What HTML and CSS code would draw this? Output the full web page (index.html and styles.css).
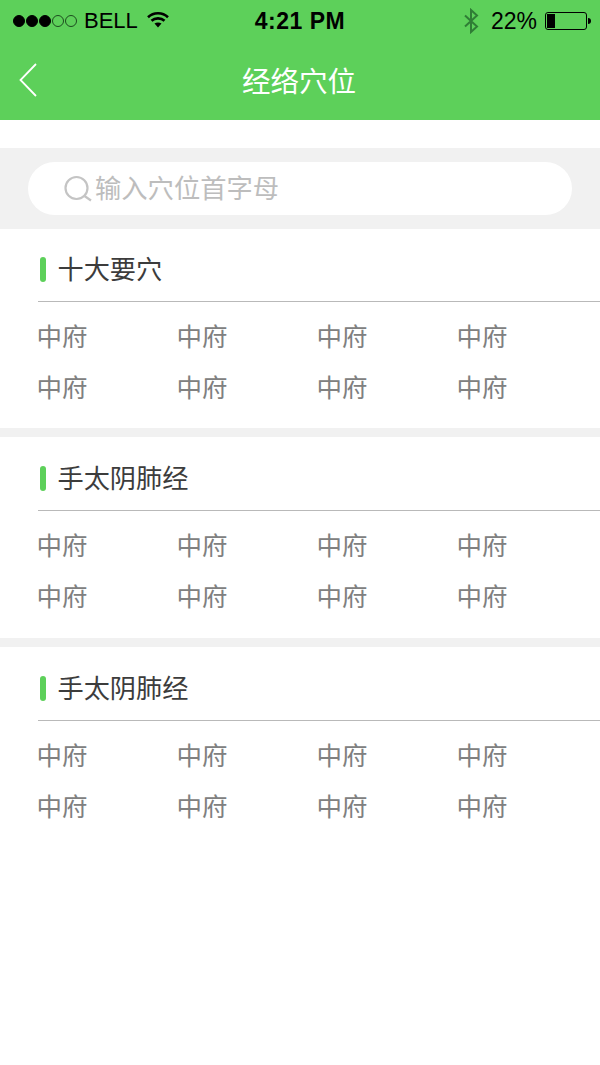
FILE: index.html
```html
<!doctype html>
<html lang="zh">
<head>
	<meta charset="UTF-8" />
	<title>经络穴位</title>
	<link rel="stylesheet" href="styles.css">
</head>
<body>
	<header class="top">
		<div class="status">
			<div class="status-left">
				<span class="dots"><i class="on"></i><i class="on"></i><i class="on"></i><i></i><i></i></span>
				<span class="carrier">BELL</span>
				<svg class="wifi" width="22" height="17" viewBox="0 0 22 17">
					<path d="M1 6.200C6.500 1 15.500 1 21 6.200" fill="none" stroke="#000" stroke-width="2.600"/>
					<path d="M4.500 9.800C8 6.500 14 6.500 17.500 9.800" fill="none" stroke="#000" stroke-width="2.600"/>
					<path d="M7.500 12.500C9.500 11 12.500 11 14.500 12.500L11 16.500Z" fill="#000"/>
				</svg>
			</div>
			<div class="clock">4:21 PM</div>
			<div class="status-right">
				<svg class="bt" width="16" height="26" viewBox="0 0 16 26">
					<path d="M2 7.500L14 18.500L8 24V2L14 7.500L2 18.500" fill="none" stroke="#2f7d35" stroke-width="2"/>
				</svg>
				<span class="percent">22%</span>
				<span class="battery"><span class="battery-fill"></span></span>
				<span class="battery-tip"></span>
			</div>
		</div>
		<div class="titlebar">
			<svg class="back" width="18" height="34" viewBox="0 0 18 34">
				<path d="M17 1L1.500 17L17 33" fill="none" stroke="#fff" stroke-width="1.800"/>
			</svg>
			<h1>经络穴位</h1>
		</div>
	</header>

	<div class="search">
		<div class="search-box">
			<svg class="search-icon" width="30" height="28" viewBox="0 0 30 28">
				<circle cx="12.500" cy="13" r="11" fill="none" stroke="#c4c4c4" stroke-width="2.200"/>
				<path d="M20.500 21L27 25.500" fill="none" stroke="#c4c4c4" stroke-width="2.200"/>
			</svg>
			<span>输入穴位首字母</span>
		</div>
	</div>

	<section class="group">
		<h2><i></i><span>十大要穴</span></h2>
		<ul class="points">
			<li>中府</li><li>中府</li><li>中府</li><li>中府</li>
			<li>中府</li><li>中府</li><li>中府</li><li>中府</li>
		</ul>
	</section>
	<section class="group">
		<h2><i></i><span>手太阴肺经</span></h2>
		<ul class="points">
			<li>中府</li><li>中府</li><li>中府</li><li>中府</li>
			<li>中府</li><li>中府</li><li>中府</li><li>中府</li>
		</ul>
	</section>
	<section class="group">
		<h2><i></i><span>手太阴肺经</span></h2>
		<ul class="points">
			<li>中府</li><li>中府</li><li>中府</li><li>中府</li>
			<li>中府</li><li>中府</li><li>中府</li><li>中府</li>
		</ul>
	</section>
</body>
</html>
```

FILE: styles.css
```css
body,ul,li,h1,h2{
	margin: 0;
	padding: 0;
}
body{
	background: #fff;
	font-family: "Liberation Sans", "Noto Sans CJK SC", sans-serif;
}
.top{
	height: 120px;
	background: #5dd05a;
}
.status{
	height: 42px;
	display: flex;
	align-items: center;
	justify-content: space-between;
	padding: 0 9px 0 13px;
	color: #000;
	font-size: 23px;
}
.status-left,
.status-right{
	width: 200px;
	display: flex;
	align-items: center;
}
.status-right{
	justify-content: flex-end;
}
.dots{
	display: flex;
	gap: 1px;
}
.dots i{
	width: 12px;
	height: 12px;
	border: 1px solid #1d4d1f;
	border-radius: 50%;
	box-sizing: border-box;
}
.dots i.on{
	background: #000;
	border-color: #000;
}
.carrier{
	margin-left: 7px;
	font-size: 22px;
}
.wifi{
	margin-left: 9px;
	margin-top: -3px;
}
.clock{
	font-weight: bold;
	letter-spacing: 0.5px;
	margin-left: -4px;
}
.bt{
	margin-right: 12px;
}
.percent{
	margin-right: 8px;
}
.battery{
	width: 42px;
	height: 18px;
	border: 1px solid #000;
	border-radius: 3px;
	box-sizing: border-box;
	padding: 1px;
}
.battery-fill{
	display: block;
	width: 8px;
	height: 14px;
	background: #000;
}
.battery-tip{
	width: 3px;
	height: 6px;
	margin-left: 1px;
	background: #000;
	border-radius: 0 3px 3px 0;
}
.titlebar{
	height: 78px;
	display: flex;
	align-items: center;
	justify-content: center;
	position: relative;
}
.titlebar h1{
	font-size: 28.500px;
	font-weight: normal;
	color: #fff;
	margin: -3px 0 0 -2px;
}
.back{
	position: absolute;
	left: 19px;
	top: 21px;
}
.search{
	margin-top: 28px;
	height: 81px;
	background: #f1f1f1;
	padding: 14px 28px;
	box-sizing: border-box;
}
.search-box{
	height: 53px;
	background: #fff;
	border-radius: 27px;
	display: flex;
	align-items: center;
	padding-left: 36px;
	color: #bdbdbd;
	font-size: 26.300px;
}
.search-box span{
	margin: -4px 0 0 -1px;
}
.search-icon{
	margin-right: 2px;
}
.group{
	height: 201px;
	padding-left: 37.500px;
	border-bottom: 9px solid #f1f1f1;
}
.group:first-of-type{
	height: 200px;
	margin-top: -1px;
}
.group:last-child{
	border-bottom: 0;
}
.group h2{
	height: 74px;
	padding-top: 10px;
	box-sizing: border-box;
	border-bottom: 1px solid #b9b9b9;
	display: flex;
	align-items: center;
	font-size: 26.200px;
	font-weight: normal;
	color: #3c3c3c;
}
.group h2 i{
	width: 6px;
	height: 25px;
	margin: 0 11.500px 0 2.500px;
	background: #5dd05a;
	border-radius: 3px;
}
.group h2 span{
	margin-bottom: 4px;
}
.points{
	list-style: none;
	display: grid;
	grid-template-columns: repeat(4, 140px);
	grid-auto-rows: 51.500px;
	margin-left: -1px;
	padding-top: 9.500px;
	font-size: 25.500px;
	line-height: 51.500px;
	color: #808080;
}
```
